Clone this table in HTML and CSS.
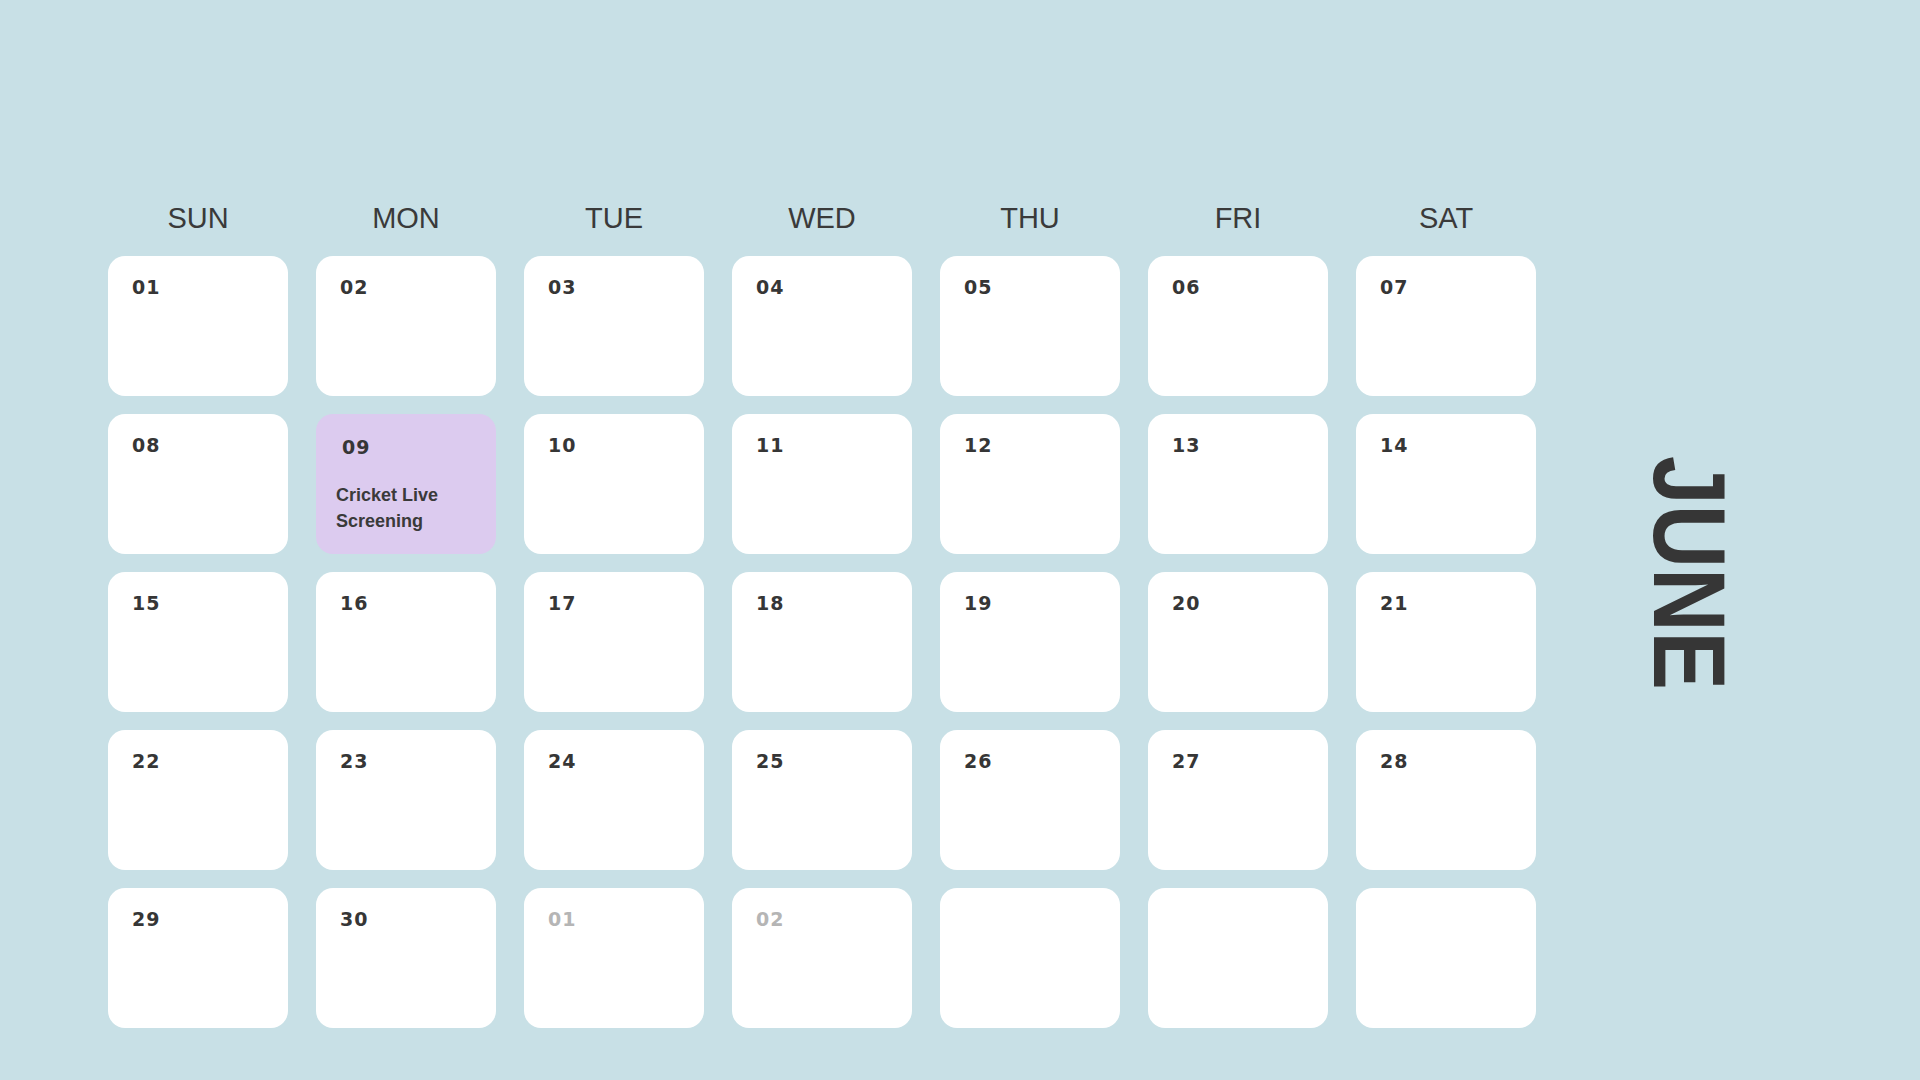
FILE: index.html
```html
<!DOCTYPE html>
<html lang="en">
<head>
  <meta charset="UTF-8">
  <title>June Calendar</title>
  <meta name="viewport" content="width=device-width, initial-scale=1.0">
  <link rel="stylesheet" href="styles.css">
</head>
<body>
  <div class="page">
    <!-- calendar grid -->
    <div class="calendar">
      <div class="weekdays">
        <div>SUN</div>
        <div>MON</div>
        <div>TUE</div>
        <div>WED</div>
        <div>THU</div>
        <div>FRI</div>
        <div>SAT</div>
      </div>

      <div class="days">
        <div class="day"><span class="num">01</span></div>
        <div class="day"><span class="num">02</span></div>
        <div class="day"><span class="num">03</span></div>
        <div class="day"><span class="num">04</span></div>
        <div class="day"><span class="num">05</span></div>
        <div class="day"><span class="num">06</span></div>
        <div class="day"><span class="num">07</span></div>

        <div class="day"><span class="num">08</span></div>
        <div class="day event">
          <span class="num">09</span>
          <p class="event-title">Cricket Live<br>Screening</p>
        </div>
        <div class="day"><span class="num">10</span></div>
        <div class="day"><span class="num">11</span></div>
        <div class="day"><span class="num">12</span></div>
        <div class="day"><span class="num">13</span></div>
        <div class="day"><span class="num">14</span></div>

        <div class="day"><span class="num">15</span></div>
        <div class="day"><span class="num">16</span></div>
        <div class="day"><span class="num">17</span></div>
        <div class="day"><span class="num">18</span></div>
        <div class="day"><span class="num">19</span></div>
        <div class="day"><span class="num">20</span></div>
        <div class="day"><span class="num">21</span></div>

        <div class="day"><span class="num">22</span></div>
        <div class="day"><span class="num">23</span></div>
        <div class="day"><span class="num">24</span></div>
        <div class="day"><span class="num">25</span></div>
        <div class="day"><span class="num">26</span></div>
        <div class="day"><span class="num">27</span></div>
        <div class="day"><span class="num">28</span></div>

        <div class="day"><span class="num">29</span></div>
        <div class="day"><span class="num">30</span></div>
        <div class="day other"><span class="num">01</span></div>
        <div class="day other"><span class="num">02</span></div>
        <div class="day"></div>
        <div class="day"></div>
        <div class="day"></div>
      </div>
    </div>

    <!-- month name -->
    <div class="month">JUNE</div>
  </div>
</body>
</html>
```

FILE: styles.css
```css
/* page */
body {
  margin: 0;
  padding: 0;
  background-color: #c8e0e6;
  font-family: "Liberation Sans", Arial, sans-serif;
  color: #363636;
}
.page {
  display: flex;
  align-items: flex-start;
  width: 1920px;
  height: 1080px;
  overflow: hidden;
}
.calendar {
  margin-left: 108px;
  padding-top: 202px;
}
/* weekday header */
.weekdays {
  display: grid;
  grid-template-columns: repeat(7, 180px);
  column-gap: 28px;
  margin-bottom: 22px;
}
.weekdays div {
  text-align: center;
  font-size: 29px;
  line-height: 32px;
  color: #3a3a3a;
}
/* day cells */
.days {
  display: grid;
  grid-template-columns: repeat(7, 180px);
  grid-auto-rows: 140px;
  column-gap: 28px;
  row-gap: 18px;
}
.day {
  background-color: #fff;
  border-radius: 17px;
  padding: 20px 24px 0;
  box-sizing: border-box;
}
.num {
  display: block;
  font-family: "DejaVu Sans", sans-serif;
  font-weight: bold;
  font-size: 19px;
  line-height: 22px;
  letter-spacing: 1px;
  color: #363636;
}
.day.other .num {
  color: #b5b5b5;
}
/* event cell */
.day.event {
  background-color: #dccbef;
  padding: 22px 20px 0;
}
.day.event .num {
  padding-left: 6px;
}
.event-title {
  margin: 24px 0 0;
  font-weight: bold;
  font-size: 18px;
  line-height: 26px;
  color: #3a3a3a;
}
/* vertical month label */
.month {
  writing-mode: vertical-rl;
  margin-left: 102px;
  margin-top: 456px;
  font-weight: bold;
  font-size: 102px;
  line-height: 1;
  color: #363636;
  transform: scaleY(0.86);
  transform-origin: top;
}
```
